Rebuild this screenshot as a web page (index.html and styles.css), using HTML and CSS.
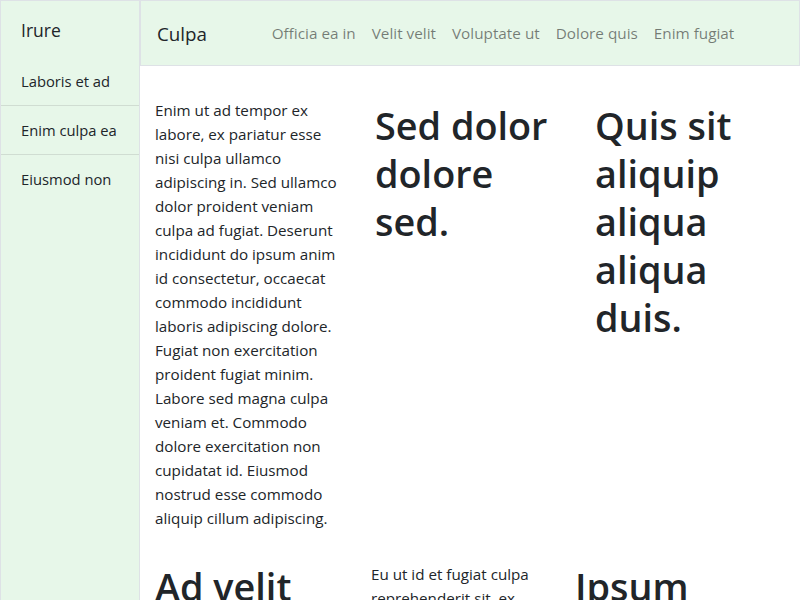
FILE: index.html
```html
<!DOCTYPE html>
<html lang="en">
<head>
<meta charset="utf-8">
<title>Culpa</title>
<link rel="stylesheet" href="styles.css">
</head>
<body>
<div class="app">
  <aside class="sidebar">
    <div class="sidebar-title">Irure</div>
    <ul class="side-list">
      <li class="side-item">Laboris et ad</li>
      <li class="side-item">Enim culpa ea</li>
      <li class="side-item">Eiusmod non</li>
    </ul>
  </aside>
  <div class="main">
    <nav class="navbar">
      <span class="brand">Culpa</span>
      <ul class="nav-links">
        <li class="nav-link">Officia ea in</li>
        <li class="nav-link">Velit velit</li>
        <li class="nav-link">Voluptate ut</li>
        <li class="nav-link">Dolore quis</li>
        <li class="nav-link">Enim fugiat</li>
      </ul>
    </nav>
    <div class="content">
      <div class="row row-one">
        <div class="col">
          <p class="text">Enim ut ad tempor ex labore, ex pariatur esse nisi culpa ullamco adipiscing in. Sed ullamco dolor proident veniam culpa ad fugiat. Deserunt incididunt do ipsum anim id consectetur, occaecat commodo incididunt laboris adipiscing dolore. Fugiat non exercitation proident fugiat minim. Labore sed magna culpa veniam et. Commodo dolore exercitation non cupidatat id. Eiusmod nostrud esse commodo aliquip cillum adipiscing.</p>
        </div>
        <div class="col">
          <h1 class="heading heading-top">Sed dolor dolore sed.</h1>
        </div>
        <div class="col">
          <h1 class="heading heading-top">Quis sit aliquip aliqua aliqua duis.</h1>
        </div>
      </div>
      <div class="row row-two">
        <div class="col">
          <h1 class="heading">Ad velit</h1>
        </div>
        <div class="col">
          <p class="text">Eu ut id et fugiat culpa reprehenderit sit, ex</p>
        </div>
        <div class="col">
          <h1 class="heading">Ipsum</h1>
        </div>
      </div>
    </div>
  </div>
</div>
</body>
</html>
```
FILE: styles.css
```css
html, body {
  margin: 0;
  padding: 0;
  height: 100%;
}
body {
  font-family: "Open Sans", "Noto Sans", sans-serif;
  color: #212529;
  background: #ffffff;
  overflow: hidden;
}
.app {
  display: flex;
  height: 100vh;
}
.sidebar {
  flex: 0 0 140px;
  box-sizing: border-box;
  background: #e7f7e9;
  border: 1px solid #dee2e6;
  border-bottom: none;
}
.sidebar-title {
  font-size: 17.5px;
  line-height: 27px;
  padding: 16px 20px 13px;
}
.side-list {
  list-style: none;
  margin: 0;
  padding: 0;
}
.side-item {
  font-size: 14.75px;
  line-height: 24px;
  padding: 12px 20px;
  border-bottom: 1px solid #d0ddd2;
  white-space: nowrap;
}
.side-item:last-child {
  border-bottom: none;
}
.main {
  flex: 1;
  display: flex;
  flex-direction: column;
  min-width: 0;
}
.navbar {
  flex: 0 0 66px;
  display: flex;
  align-items: center;
  height: 66px;
  box-sizing: border-box;
  padding: 0 16px;
  background: #e7f7e9;
  border: 1px solid #dee2e6;
}
.brand {
  font-size: 18.8px;
  line-height: 28px;
  margin-right: 16px;
  margin-top: 2px;
}
.nav-links {
  display: flex;
  list-style: none;
  margin: 0 auto;
  padding: 0;
}
.nav-link {
  font-size: 15.3px;
  line-height: 24px;
  padding: 0 8px;
  color: rgba(0, 0, 0, 0.5);
  white-space: nowrap;
}
.content {
  flex: 0 0 auto;
  padding-top: 32px;
}
.row {
  display: grid;
}
.row-one {
  grid-template-columns: 220px 220px 220px;
}
.row-two {
  grid-template-columns: 216px 204px 1fr;
  margin-top: 32px;
}
.col {
  padding: 0 15px;
  min-width: 0;
}
.text {
  margin: 0;
  font-size: 15.2px;
  line-height: 24px;
}
.heading {
  margin: 1px 0 0;
  font-size: 37.8px;
  line-height: 48px;
  font-weight: 600;
}
.heading-top {
  margin-top: 4px;
}
```
